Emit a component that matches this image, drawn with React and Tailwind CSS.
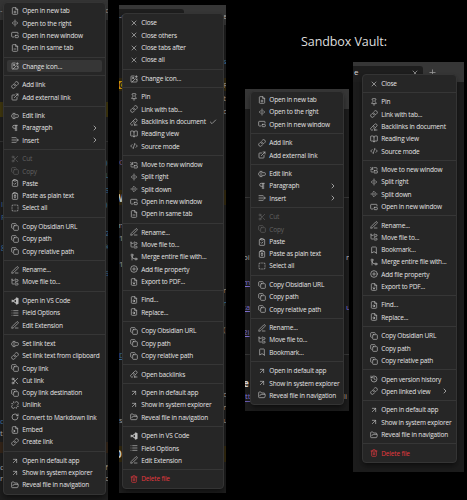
import {
  ArrowUpRight, Bookmark, BookOpen, Check, ChevronRight, CirclePlus, ClipboardCheck, ClipboardType, CodeXml, Copy,
  ExternalLink, FileInput, FileMinus, FilePlus, FileSearch, FileDown, FolderOpen, FolderTree, GitMerge, History,
  ImagePlus, Link, List, PenLine, PictureInPicture, PictureInPicture2, Pilcrow, Pin, Plus, RotateCw, Scissors,
  SeparatorHorizontal, SeparatorVertical, SquareDashed, TextCursorInput, Trash2, Unlink, X,
} from "lucide-react"
import clsx from "clsx"

function VsCode({ className }) {
  return (
    <svg viewBox="0 0 24 24" className={className} fill="none" stroke="currentColor" strokeWidth="3.4" strokeLinejoin="round">
      <path d="M17 4v16L2 8.500M17 4L2 15.500" />
      <path d="M16 1.500l6 2.500v16l-6 2.500z" fill="currentColor" strokeWidth="1" />
    </svg>
  )
}

function Backlinks({ className }) {
  return (
    <svg viewBox="0 0 24 24" className={className} fill="none" stroke="currentColor" strokeWidth="2" strokeLinecap="round" strokeLinejoin="round">
      <path d="M9 9l5-5a4 4 0 0 1 6 6l-5 5a4 4 0 0 1-5 0" />
      <path d="M13 10a4 4 0 0 0-5 0l-4 4a4 4 0 0 0 4 7" />
      <path d="M21 21h-8M16 18l-3 3 3 3" />
    </svg>
  )
}

function InsertLines({ className }) {
  return (
    <svg viewBox="0 0 24 24" className={className} fill="none" stroke="currentColor" strokeWidth="2" strokeLinecap="round" strokeLinejoin="round">
      <path d="M3 5h12M3 12h18M3 19h12M18 8l4 4-4 4" />
    </svg>
  )
}

const copyGroup = [
  { icon: Copy, label: "Copy Obsidian URL" },
  { icon: Copy, label: "Copy path" },
  { icon: Copy, label: "Copy relative path" },
]

const systemGroup = [
  { icon: ArrowUpRight, label: "Open in default app" },
  { icon: ArrowUpRight, label: "Show in system explorer" },
  { icon: FolderOpen, label: "Reveal file in navigation" },
]

const pluginGroup = [
  { icon: VsCode, label: "Open in VS Code" },
  { icon: List, label: "Field Options" },
  { icon: PenLine, label: "Edit Extension" },
]

const addLinkGroup = [
  { icon: Link, label: "Add link" },
  { icon: ExternalLink, label: "Add external link" },
]

const editGroup = [
  { icon: TextCursorInput, label: "Edit link" },
  { icon: Pilcrow, label: "Paragraph", submenu: true },
  { icon: InsertLines, label: "Insert", submenu: true },
]

const clipboardGroup = [
  { icon: Scissors, label: "Cut", disabled: true },
  { icon: Copy, label: "Copy", disabled: true },
  { icon: ClipboardCheck, label: "Paste" },
  { icon: ClipboardType, label: "Paste as plain text" },
  { icon: SquareDashed, label: "Select all" },
]

const findGroup = [
  { icon: FileSearch, label: "Find..." },
  { icon: FileSearch, label: "Replace..." },
]

const deleteGroup = [{ icon: Trash2, label: "Delete file", danger: true }]

const linkMenu = [
  [
    { icon: FilePlus, label: "Open in new tab" },
    { icon: SeparatorVertical, label: "Open to the right" },
    { icon: PictureInPicture2, label: "Open in new window" },
    { icon: FileMinus, label: "Open in same tab" },
  ],
  [{ icon: ImagePlus, label: "Change icon...", active: true }],
  addLinkGroup,
  editGroup,
  clipboardGroup,
  copyGroup,
  [
    { icon: PenLine, label: "Rename..." },
    { icon: FolderTree, label: "Move file to..." },
  ],
  pluginGroup,
  [
    { icon: TextCursorInput, label: "Set link text" },
    { icon: Link, label: "Set link text from clipboard" },
    { icon: Copy, label: "Copy link" },
    { icon: Scissors, label: "Cut link" },
    { icon: Copy, label: "Copy link destination" },
    { icon: Unlink, label: "Unlink" },
    { icon: RotateCw, label: "Convert to Markdown link" },
    { icon: FileInput, label: "Embed" },
    { icon: Link, label: "Create link" },
  ],
  systemGroup,
]

const tabMenu = [
  [
    { icon: X, label: "Close" },
    { icon: X, label: "Close others" },
    { icon: X, label: "Close tabs after" },
    { icon: X, label: "Close all" },
  ],
  [{ icon: ImagePlus, label: "Change icon..." }],
  [
    { icon: Pin, label: "Pin" },
    { icon: Link, label: "Link with tab..." },
    { icon: Backlinks, label: "Backlinks in document", checked: true },
    { icon: BookOpen, label: "Reading view" },
    { icon: CodeXml, label: "Source mode" },
  ],
  [
    { icon: PictureInPicture, label: "Move to new window" },
    { icon: SeparatorVertical, label: "Split right" },
    { icon: SeparatorHorizontal, label: "Split down" },
    { icon: PictureInPicture2, label: "Open in new window" },
    { icon: FileMinus, label: "Open in same tab" },
  ],
  [
    { icon: PenLine, label: "Rename..." },
    { icon: FolderTree, label: "Move file to..." },
    { icon: GitMerge, label: "Merge entire file with..." },
    { icon: CirclePlus, label: "Add file property" },
    { icon: FileDown, label: "Export to PDF..." },
  ],
  findGroup,
  copyGroup,
  [{ icon: Backlinks, label: "Open backlinks" }],
  systemGroup,
  pluginGroup,
  deleteGroup,
]

const sandboxLinkMenu = [
  [
    { icon: FilePlus, label: "Open in new tab" },
    { icon: SeparatorVertical, label: "Open to the right" },
    { icon: PictureInPicture2, label: "Open in new window" },
  ],
  addLinkGroup,
  editGroup,
  clipboardGroup,
  copyGroup,
  [
    { icon: PenLine, label: "Rename..." },
    { icon: FolderTree, label: "Move file to..." },
    { icon: Bookmark, label: "Bookmark..." },
  ],
  systemGroup,
]

const sandboxTabMenu = [
  [{ icon: X, label: "Close" }],
  [
    { icon: Pin, label: "Pin" },
    { icon: Link, label: "Link with tab..." },
    { icon: Backlinks, label: "Backlinks in document" },
    { icon: BookOpen, label: "Reading view" },
    { icon: CodeXml, label: "Source mode" },
  ],
  [
    { icon: PictureInPicture, label: "Move to new window" },
    { icon: SeparatorVertical, label: "Split right" },
    { icon: SeparatorHorizontal, label: "Split down" },
    { icon: PictureInPicture2, label: "Open in new window" },
  ],
  [
    { icon: PenLine, label: "Rename..." },
    { icon: FolderTree, label: "Move file to..." },
    { icon: Bookmark, label: "Bookmark..." },
    { icon: GitMerge, label: "Merge entire file with..." },
    { icon: CirclePlus, label: "Add file property" },
    { icon: FileDown, label: "Export to PDF..." },
  ],
  findGroup,
  copyGroup,
  [
    { icon: History, label: "Open version history" },
    { icon: Link, label: "Open linked view", submenu: true },
  ],
  systemGroup,
  deleteGroup,
]

function MenuItem({ item }) {
  const Icon = item.icon
  return (
    <div
      className={clsx(
        "mx-[3px] flex h-[12.28px] items-center rounded-[2px] pl-[3.300px] pr-[3.500px] text-[6.500px] leading-none tracking-[-0.170px] whitespace-nowrap",
        item.active && "bg-[#363636]",
        item.disabled && "text-[#616161]",
        item.danger && "text-[#e5393f]",
        !item.disabled && !item.danger && "text-[#e4e4e4]"
      )}
    >
      <Icon className={clsx("mr-[3.700px] size-[8px] shrink-0", !item.disabled && !item.danger && "text-[#c0c0c0]")} />
      <span className="pt-[1.200px]">{item.label}</span>
      {item.checked && <Check className="ml-[3px] size-[8px] shrink-0 text-[#c0c0c0]" />}
      {item.submenu && <ChevronRight className="ml-auto size-[8px] shrink-0 text-[#d8d8d8]" />}
    </div>
  )
}

function Menu({ groups, className }) {
  return (
    <div className={clsx("absolute rounded-[4px] border border-[#343434] bg-[#262626] shadow-md shadow-black/40", className)}>
      {groups.map((group, i) => (
        <div key={i}>
          {i > 0 && <div className="my-[2.680px] h-px bg-[#363636]" />}
          {group.map((item) => (
            <MenuItem key={item.label} item={item} />
          ))}
        </div>
      ))}
    </div>
  )
}

// One line of the note, only its two ends show beside the menu
function Line({ left, right, className, leftClass }) {
  return (
    <div className={clsx("flex shrink-0 items-center justify-between", className)}>
      <span className={leftClass}>{left}</span>
      <span className="w-[3px]">{right}</span>
    </div>
  )
}

export default function App() {
  return (
    <div className="flex h-[500px] w-[467px] items-start overflow-hidden bg-black font-['Open_Sans','Noto_Sans',sans-serif]">
      {/* Link menu */}
      <div className="relative flex h-[500px] w-[108px] shrink-0 flex-col overflow-hidden bg-[#1e1e1e] text-[8px] leading-none text-[#3e78a8]">
        <Line left="-" right="c" className="h-[20px] bg-[#343434] text-[#a0a0a0]" />
        <Line className="mt-[82px] h-[15px] bg-[#40370f]" />
        <Line className="mt-[24px] h-px bg-[#333333]" />
        <Line right=")" className="mt-[14px] h-[12px]" />
        <Line right="L" className="h-[14px]" />
        <Line right="S" className="h-[15px]" />
        <Line left="l" right=")" leftClass="pl-px" className="h-[13px]" />
        <Line left="F" leftClass="pl-px" className="h-[13px]" />
        <Line right="2" className="mt-[3px] h-[13px]" />
        <Line left="g" right="k" leftClass="pl-px" className="h-[13px]" />
        <Line right="9" className="mt-[14px] h-[13px]" />
        <Line left="c" className="mt-[136px] h-[12px]" />
        <Line left="t" className="h-[12px] text-[#b0b0b0]" />
        <Line className="mt-[3px] h-[11px] bg-[#35261a]" />
        <Line left="c" right="f" className="mt-[9px] h-[10px] text-[#b0b0b0]" />
        <Line left="r" right="c" className="h-[12px] text-[#b0b0b0]" />
        <Menu groups={linkMenu} className="left-[3.300px] top-[1.800px] h-[493px] w-[103px] pt-[2px]" />
      </div>

      {/* Tab menu */}
      <div className="relative ml-[11px] mt-[5px] flex h-[488px] w-[107px] shrink-0 flex-col overflow-hidden bg-[#1e1e1e] text-[8px] leading-none text-[#b0b0b0]">
        <div className="flex h-[20px] shrink-0 items-end justify-between bg-[#363636]">
          <span className="h-[16px] w-[65px] rounded-tr-[3px] bg-[#1e1e1e] pt-[3px]">-c</span>
          <span className="w-[3px] pb-[5px]">e</span>
        </div>
        <Line right="s" className="mt-[29px] h-[13px] text-[#3e78a8]" />
        <Line left="G" right="R" leftClass="bg-[#d9a406] font-bold text-[#1e1e1e]" className="mt-[11px] h-[13px] bg-[#33290f]" />
        <Line right="t" className="h-[13px]" />
        <Line right="o" className="h-[13px]" />
        <Line left="C" className="mt-[38px] h-[13px] text-[#80609a]" />
        <Line left="W" leftClass="-ml-[5px] text-[10px] font-bold text-[#dadada]" className="mt-[22px] h-[15px] bg-[#33290f]" />
        <Line left="m" leftClass="-ml-[3px]" className="mt-[13px] h-[13px]" />
        <Line left="1" className="h-[13px]" />
        <Line left="1" className="mt-[13px] h-[13px]" />
        <Line right="r" className="mt-[13px] h-[13px]" />
        <Line right="n" className="h-[13px] text-[#3e78a8]" />
        <Line right="(" className="mt-[13px] h-[13px]" />
        <Line left="D" leftClass="underline" className="mt-[13px] h-[13px] text-[#3e78a8]" />
        <Line right="o" className="mt-[26px] h-[13px]" />
        <Line right="r" className="h-[13px]" />
        <Line left="sp" right="u" className="h-[13px]" />
        <Line left="O" leftClass="-ml-[5px] text-[10px] font-bold text-[#dadada]" className="mt-[20px] h-[16px] bg-[#33290f]" />
        <Menu groups={tabMenu} className="left-[3.300px] top-[8.300px] h-[475.500px] w-[102px] pt-[2.700px]" />
      </div>

      {/* Sandbox vault */}
      <div className="ml-[19px] flex shrink-0 flex-col">
        <div className="h-[62px] pl-[56px] pt-[34px] text-[12.500px] leading-[16px] tracking-[-0.080px] whitespace-nowrap text-[#dedede]">
          Sandbox Vault:
        </div>
        <div className="flex items-start">
          <div className="relative mt-[27px] flex h-[322px] w-[104px] shrink-0 flex-col overflow-hidden bg-[#1c1c1c] text-[8px] leading-none text-[#8273d6]">
            <Line className="h-[20px] bg-[#363636]" />
            <Line className="mt-[88px] h-px bg-[#363636]" />
            <Line left="oi" right="ne" leftClass="-ml-[2px]" className="mt-[53px] h-[12px] text-[#b0b0b0]" />
            <Line left="m" leftClass="-ml-[2px] underline" className="mt-[13px] h-[12px]" />
            <Line left="ca" right="up" leftClass="-ml-[3px] underline" className="mt-[13px] h-[12px]" />
            <Line left="2i" leftClass="-ml-[2px] underline" className="mt-[13px] h-[12px]" />
            <Line className="mt-[16px] h-px bg-[#363636]" />
            <Line left="e" leftClass="-ml-[2px] text-[10px] font-bold text-[#dadada]" className="mt-[21px] h-[14px]" />
            <div className="mt-[1px] flex h-[11px] shrink-0 justify-between">
              <span className="w-[82px] border-b border-[#6a5cb4] pt-px">tt</span>
              <span className="w-[6px] pt-px text-[#b0b0b0]">li</span>
            </div>
            <Menu groups={sandboxLinkMenu} className="left-[5.300px] top-[1.800px] h-[314px] w-[94px] pt-[1.900px]" />
          </div>
          <div className="relative ml-[4px] h-[410px] w-[111px] shrink-0 overflow-hidden bg-[#1c1c1c]">
            <div className="flex h-[20px] items-start bg-[#363636] pt-[4px]">
              <div className="flex h-[16px] w-[70px] items-start justify-between rounded-tr-[3px] bg-[#1e1e1e] pl-px pr-[4px] pt-[2px] text-[8px] leading-none text-[#dadada]">
                <span>e</span>
                <X className="mt-px size-[8px] text-[#b0b0b0]" />
              </div>
              <Plus className="ml-[5px] mt-[2px] size-[9px] text-[#a0a0a0]" />
            </div>
            <Menu groups={sandboxTabMenu} className="left-[9.300px] top-[11.800px] h-[389px] w-[94.500px] pt-[2.600px]" />
          </div>
        </div>
      </div>
    </div>
  )
}
